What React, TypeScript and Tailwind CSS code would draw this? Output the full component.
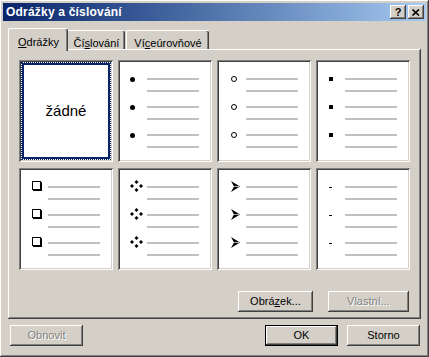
import React from 'react';

// Klasické windowsové okraje
const raised =
  'shadow-[inset_-1px_-1px_#404040,inset_1px_1px_#ffffff,inset_-2px_-2px_#808080,inset_2px_2px_#d4d0c8]';
const sunken =
  'shadow-[inset_1px_1px_#808080,inset_-1px_-1px_#ffffff,inset_2px_2px_#404040,inset_-2px_-2px_#d4d0c8]';
const disabledText = 'text-[#808080] [text-shadow:1px_1px_0_#ffffff]';

type BulletKind = 'dot' | 'circle' | 'square' | 'box' | 'diamonds' | 'arrow' | 'dash';

const Bullet: React.FC<{ kind: BulletKind }> = ({ kind }) => {
  switch (kind) {
    case 'dot':
      return <div className="ml-[12px] w-[5px] h-[5px] rounded-full bg-black" />;
    case 'circle':
      return <div className="ml-[14px] w-[6px] h-[6px] rounded-full border border-black" />;
    case 'square':
      return <div className="ml-[13px] w-[4px] h-[4px] bg-black" />;
    case 'box':
      return <div className="ml-[13px] -mt-[3px] w-[9px] h-[9px] border border-black bg-white shadow-[1px_1px_0_#000000]" />;
    case 'diamonds':
      return (
        <svg className="ml-[12px] -mt-[3px]" width="13" height="12" viewBox="0 0 13 12">
          <path d="M6.5 0 L8.5 2 L6.5 4 L4.5 2 Z" fill="#000" />
          <path d="M6.5 8 L8.5 10 L6.5 12 L4.5 10 Z" fill="#000" />
          <path d="M2 4 L4 6 L2 8 L0 6 Z" fill="#000" />
          <path d="M11 4 L13 6 L11 8 L9 6 Z" fill="#000" />
        </svg>
      );
    case 'arrow':
      return (
        <svg className="ml-[14px] -mt-[2px]" width="9" height="11" viewBox="0 0 9 11">
          <path d="M0 0 L9 5.5 L0 11 L3 5.5 Z" fill="#000" />
          <path d="M3.2 5.5 L8 5.5" stroke="#fff" strokeWidth="0.7" />
        </svg>
      );
    case 'dash':
      return <div className="ml-[13px] w-[3px] h-[1px] bg-black" />;
  }
};

const BulletCell: React.FC<{ kind: BulletKind }> = ({ kind }) => (
  <div className={`bg-white ${sunken} pt-[18px] flex flex-col gap-[14px]`}>
    {[0, 1, 2].map((i) => (
      <div key={i} className="flex">
        <div className="w-[29px] h-[2px] flex items-center">
          <Bullet kind={kind} />
        </div>
        <div className="flex flex-col gap-[10px]">
          <div className="w-[52px] h-[2px] bg-[#c0c0c0]" />
          <div className="w-[52px] h-[2px] bg-[#c0c0c0]" />
        </div>
      </div>
    ))}
  </div>
);

const Button: React.FC<{
  children: React.ReactNode;
  width: string;
  disabled?: boolean;
  isDefault?: boolean;
}> = ({ children, width, disabled, isDefault }) => (
  <div className={`${width} h-[21px] ${isDefault ? 'border border-black' : ''}`}>
    <div
      className={`h-full bg-[#d4d0c8] ${raised} flex items-center justify-center text-[11px] ${
        disabled ? disabledText : 'text-black'
      }`}
    >
      {children}
    </div>
  </div>
);

const App: React.FC = () => {
  return (
    <div
      className={`w-[429px] h-[357px] bg-[#d4d0c8] p-[3px] flex flex-col ${raised}`}
      style={{ fontFamily: '"Liberation Sans", Arial, sans-serif' }}
    >
      {/* Titulek */}
      <div className="h-[18px] bg-gradient-to-r from-[#0a246a] to-[#a6caf0] flex items-center justify-between pl-[3px] pr-[2px]">
        <span className="text-white font-bold text-[12px] tracking-[0.2px]">Odrážky a číslování</span>
        <div className="flex gap-[2px]">
          <div className={`w-[16px] h-[14px] bg-[#d4d0c8] ${raised} flex items-center justify-center text-[11px] font-bold leading-none`}>
            ?
          </div>
          <div className={`w-[16px] h-[14px] bg-[#d4d0c8] ${raised} flex items-center justify-center`}>
            <svg width="8" height="7" viewBox="0 0 8 7">
              <path d="M0.5 0.5 L7 6.5 M7 0.5 L0.5 6.5" stroke="#000" strokeWidth="1.6" />
            </svg>
          </div>
        </div>
      </div>

      <div className="px-[5px] pt-[7px] flex flex-col">
        {/* Záložky */}
        <div className="flex items-end h-[21px] text-[11px]">
          <div className="relative z-10 -mb-[2px] w-[60px] h-[23px] bg-[#d4d0c8] border-l border-t border-white rounded-tl-[2px] rounded-tr-[2px] shadow-[inset_-1px_0_#404040,inset_-2px_0_#808080] flex items-start justify-center pt-[5px]">
            <span><u>O</u>drážky</span>
          </div>
          <div className="w-[57px] h-[19px] border-t border-white shadow-[inset_-1px_0_#404040,inset_-2px_0_#808080] rounded-tr-[2px] flex items-start justify-center pt-[4px]">
            <span>Čí<u>s</u>lování</span>
          </div>
          <div className="ml-[1px] w-[83px] h-[19px] border-l border-t border-white shadow-[inset_-1px_0_#404040,inset_-2px_0_#808080] rounded-tl-[2px] rounded-tr-[2px] flex items-start justify-center pt-[4px]">
            <span>Ví<u>c</u>eúrovňové</span>
          </div>
        </div>

        {/* Panel */}
        <div className={`h-[270px] ${raised} pl-[11px] pt-[11px] pb-[7px] flex flex-col`}>
          <div className="grid grid-cols-[repeat(4,94px)] grid-rows-[102px_102px] gap-x-[5px] gap-y-[6px]">
            <div className={`bg-white ${sunken} p-[2px]`}>
              <div className="h-full border border-dotted border-[#0a246a]">
                <div className="h-full border-2 border-[#0a246a] flex items-center justify-center text-[15px] text-black">
                  žádné
                </div>
              </div>
            </div>
            <BulletCell kind="dot" />
            <BulletCell kind="circle" />
            <BulletCell kind="square" />
            <BulletCell kind="box" />
            <BulletCell kind="diamonds" />
            <BulletCell kind="arrow" />
            <BulletCell kind="dash" />
          </div>
          <div className="mt-[21px] flex justify-end gap-[15px] pr-[12px]">
            <Button width="w-[75px]">
              <span>Obrá<u>z</u>ek...</span>
            </Button>
            <Button width="w-[81px]" disabled>
              <span>Vlastní...</span>
            </Button>
          </div>
        </div>

        {/* Spodní tlačítka */}
        <div className="mt-[6px] flex pl-[2px] pr-[1px]">
          <Button width="w-[73px]" disabled>
            <span>Obnovit</span>
          </Button>
          <div className="flex-1" />
          <div className="flex gap-[9px]">
            <Button width="w-[73px]" isDefault>
              <span>OK</span>
            </Button>
            <Button width="w-[73px]">
              <span>Storno</span>
            </Button>
          </div>
        </div>
      </div>
    </div>
  );
};

export default App;
